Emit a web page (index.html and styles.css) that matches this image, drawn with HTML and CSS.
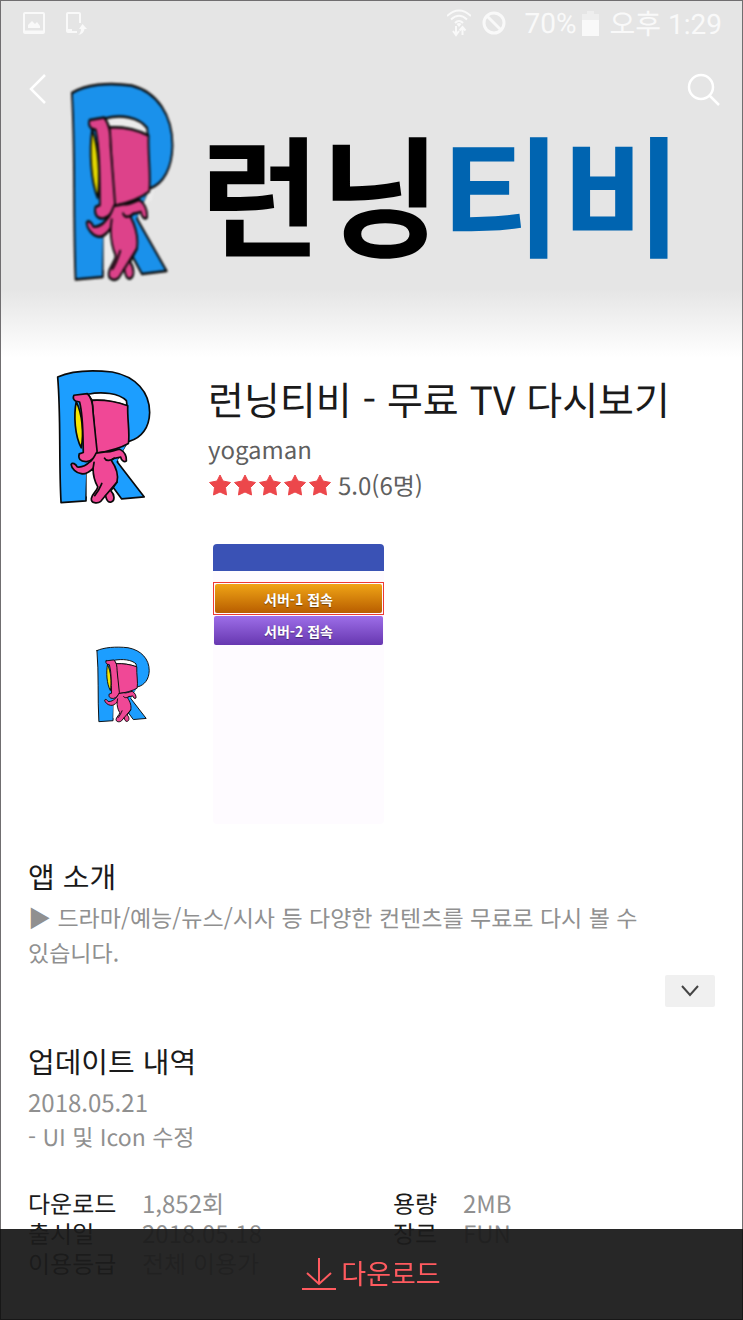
FILE: index.html
```html
<!DOCTYPE html>
<html lang="ko">
<head>
  <meta charset="UTF-8">
  <meta name="viewport" content="width=device-width, initial-scale=1.0">
  <title>런닝티비 - 무료 TV 다시보기</title>
  <link rel="stylesheet" href="styles.css">
</head>
<body>
  <svg class="defs" aria-hidden="true">
    <symbol id="mascot" viewBox="48 26 282 404" preserveAspectRatio="none">
      <g stroke="#0a0a0a" stroke-width="5" stroke-linejoin="round" stroke-linecap="round">
        <path fill="#1c9eff" d="M53 50C90 33 150 28 215 35C285 48 326 95 326 155C325 200 302 231 265 241L230 302L310 406L243 412L205 360L195 300L140 330L137 418L63 423C56 300 63 170 53 50Z"/>
        <path fill="#fff" stroke="none" d="M231 298L263 243L275 244L270 265L258 270L262 299L240 302ZM139 332L158 312L168 370L152 400L139 405Z"/>
        <path fill="#fff" d="M143 101C185 92 235 98 257 120L259 136C225 122 190 118 155 119Z"/>
        <path fill="#f04896" d="M155 119C190 117 225 122 261 135C259 175 268 215 263 247C237 262 205 270 168 276Z"/>
        <path fill="#f5e800" d="M108 123C100 165 104 225 123 260C131 215 126 160 108 123Z"/>
        <path fill="#f04896" d="M101 104L141 99C155 112 158 130 158 155L170 270C170 284 155 298 139 301C119 302 113 291 117 278L129 274C128 220 129 165 118 124L106 121C99 116 98 110 101 104Z"/>
        <path fill="#f04896" d="M195 272C207 275 220 267 237 264C252 272 258 285 257 299C250 305 242 297 240 288L219 292L212 297C228 320 234 342 229 362L211 388C223 400 223 417 212 421C201 425 197 411 195 402L181 419C171 427 151 425 153 410C155 397 169 390 172 376C160 356 158 337 158 321C146 333 136 340 123 337C108 335 94 321 93 310C96 302 107 308 111 317C127 319 139 311 148 302C157 297 162 285 167 276Z"/>
        <path fill="none" d="M192 291C197 302 211 297 221 291M184 366C177 382 174 390 163 402M229 362L195 402M158 321L161 303"/>
      </g>
    </symbol>
    <symbol id="star" viewBox="0 0 24 24">
      <path fill="#ec474b" stroke="#ec474b" stroke-width="1" stroke-linejoin="round" d="M12 2L15 8L22.500 9.500L17.500 14.500L18.500 22L12 19L5.500 22L6.500 14.500L1.500 9.500L9 8Z"/>
    </symbol>
  </svg>

  <div class="app">
    <header class="banner">
      <div class="banner-art">
        <svg class="banner-mascot" aria-hidden="true"><use href="#mascot"/></svg>
        <div class="banner-name">런닝<span>티비</span></div>
      </div>
      <div class="banner-top">
        <div class="status">
          <div class="status-group">
            <svg width="22" height="24" viewBox="0 0 22 24" fill="none" stroke="#f9f9f9" stroke-width="2">
              <rect x="1" y="2" width="20" height="20" rx="1"/>
              <path d="M1 20.500H21"/>
              <path d="M5 17V14L9 10L12 13L14 11L17 15V17Z" fill="#f9f9f9" stroke="none"/>
            </svg>
            <svg width="22" height="24" viewBox="0 0 22 24" fill="none" stroke="#f9f9f9" stroke-width="2">
              <path d="M15 12V3Q15 2 14 2H3Q2 2 2 3V20Q2 21 3 21H12M2 19H7"/>
              <path d="M17.500 13L22 18H19.500Q19 23 13 24Q16 22 16 18H14Z" fill="#f9f9f9" stroke="none"/>
            </svg>
          </div>
          <div class="status-group status-right">
            <svg width="24" height="28" viewBox="0 0 24 28" fill="none" stroke="#f9f9f9" stroke-width="2">
              <path d="M0 7Q12 -4 24 7M4 10.500Q12 3 20 10.500M8 14Q12 10 16 14"/>
              <path d="M12 18L9.500 15Q12 13 14.500 15Z" fill="#f9f9f9" stroke="none"/>
              <path d="M9 17V25M6 22L9 26L12 22M15.500 26V19M12.500 21.500L15.500 18L18.500 21.500"/>
            </svg>
            <svg width="24" height="24" viewBox="0 0 24 24" fill="none" stroke="#f9f9f9" stroke-width="3">
              <circle cx="12" cy="12" r="10"/><path d="M5 5L19 19"/>
            </svg>
            <span class="percent">70%</span>
            <svg width="17" height="25" viewBox="0 0 17 25">
              <path fill="#eee" d="M0 3H5V0H12V3H17V10H0Z"/><path fill="#f9f9f9" d="M0 9H17V25H0Z"/>
            </svg>
            <span class="clock">오후 1:29</span>
          </div>
        </div>
        <nav class="nav">
          <button class="icon-btn" aria-label="뒤로">
            <svg width="20" height="34" viewBox="0 0 20 34" fill="none" stroke="#fff" stroke-width="2.500"><path d="M17 3L3 17L17 31"/></svg>
          </button>
          <button class="icon-btn" aria-label="검색">
            <svg width="34" height="34" viewBox="0 0 34 34" fill="none" stroke="#fff" stroke-width="2.500"><circle cx="14" cy="15" r="12"/><path d="M22.500 23.500L32 33"/></svg>
          </button>
        </nav>
      </div>
    </header>

    <main>
      <section class="summary">
        <svg class="app-icon" aria-hidden="true"><use href="#mascot"/></svg>
        <div class="summary-text">
          <h1>런닝티비 - 무료 TV 다시보기</h1>
          <p>yogaman</p>
          <div class="rating">
            <svg><use href="#star"/></svg>
            <svg><use href="#star"/></svg>
            <svg><use href="#star"/></svg>
            <svg><use href="#star"/></svg>
            <svg><use href="#star"/></svg>
            <span>5.0(6명)</span>
          </div>
        </div>
      </section>

      <section class="shots">
        <div class="shot shot-splash">
          <svg class="splash-icon" aria-hidden="true"><use href="#mascot"/></svg>
        </div>
        <div class="shot shot-server">
          <div class="shot-bar"></div>
          <div class="selected"><button class="server orange">서버-1 접속</button></div>
          <button class="server purple">서버-2 접속</button>
        </div>
      </section>

      <section class="intro">
        <h2>앱 소개</h2>
        <p>▶ 드라마/예능/뉴스/시사 등 다양한 컨텐츠를 무료로 다시 볼 수 있습니다.</p>
        <button class="more" aria-label="더보기">
          <svg width="18" height="12" viewBox="0 0 18 12" fill="none" stroke="#444" stroke-width="2"><path d="M1 1L9 10L17 1"/></svg>
        </button>
      </section>

      <section class="updates">
        <h2>업데이트 내역</h2>
        <p class="date">2018.05.21</p>
        <p>- UI 및 Icon 수정</p>
      </section>

      <dl class="details">
        <dt>다운로드</dt><dd>1,852회</dd>
        <dt>용량</dt><dd>2MB</dd>
        <dt>출시일</dt><dd>2018.05.18</dd>
        <dt>장르</dt><dd>FUN</dd>
        <dt>이용등급</dt><dd>전체 이용가</dd>
      </dl>
    </main>

    <button class="download">
      <svg width="34" height="34" viewBox="0 0 34 34" fill="none" stroke="#ff5a5f" stroke-width="2"><path d="M17 1V27M5 16L17 27L29 16M0 32H34"/></svg>
      <span>다운로드</span>
    </button>
  </div>
</body>
</html>
```
FILE: styles.css
```css
* {
  box-sizing: border-box;
}
body {
  margin: 0;
  background: #fff;
  color: #1a1a1a;
  font-family: "Noto Sans CJK KR", sans-serif;
  text-rendering: geometricPrecision;
}
h1, h2, p, dl, dd {
  margin: 0;
  font-weight: 400;
}
button {
  border: none;
  padding: 0;
  background: none;
  font-family: inherit;
  cursor: pointer;
}
svg {
  display: block;
  flex-shrink: 0;
}
.defs {
  position: absolute;
  width: 0;
  height: 0;
}
.app {
  min-height: 100vh;
  border: 1px solid #706e70;
}

/* banner */
.banner {
  position: relative;
  height: 360px;
  background: linear-gradient(#e5e5e5 80%, #fff 99%);
}
.banner-art {
  display: flex;
  padding: 80px 64px 0 69px;
  gap: 26px;
}
.banner-mascot {
  width: 104px;
  height: 202px;
  filter: brightness(0.92) blur(1px);
}
.banner-name {
  padding-top: 8px;
  font-size: 131px;
  line-height: 202px;
  font-weight: 700;
  color: #000;
  white-space: nowrap;
}
.banner-name span {
  color: #0064b0;
}
.banner-top {
  position: absolute;
  top: 0;
  left: 0;
  right: 0;
}
.status {
  display: flex;
  justify-content: space-between;
  height: 44px;
  padding: 0 20px 0 22px;
  color: #f9f9f9;
  font-family: Roboto, "Noto Sans CJK KR", sans-serif;
  font-size: 28px;
  font-weight: 400;
}
.status-group {
  display: flex;
  align-items: center;
  gap: 20px;
}
.status-right {
  gap: 11px;
}
.percent {
  margin-left: 8px;
  margin-right: -6px;
}
.nav {
  display: flex;
  justify-content: space-between;
  align-items: center;
  padding: 27px 21px 0 27px;
}

/* app summary */
.summary {
  display: flex;
  gap: 57px;
  padding: 8px 28px 0 55px;
}
.app-icon {
  width: 95px;
  height: 136px;
}
.summary-text h1 {
  font-size: 39px;
  line-height: 60px;
}
.summary-text p,
.rating {
  color: #5f5f5f;
  font-size: 24px;
  line-height: 36px;
}
.summary-text p {
  margin-top: 2px;
}
.rating {
  display: flex;
  align-items: center;
  gap: 1px;
}
.rating svg {
  width: 24px;
  height: 24px;
}
.rating span {
  margin-left: 5px;
}

/* screenshots */
.shots {
  display: flex;
  gap: 5px;
  margin-top: 39px;
  padding: 0 36px;
}
.shot {
  width: 171px;
  height: 280px;
}
.shot-splash {
  display: flex;
  align-items: center;
  justify-content: center;
}
.splash-icon {
  width: 54px;
  height: 77px;
}
.shot-server {
  background: #fefbff;
  border-radius: 4px;
  overflow: hidden;
}
.shot-bar {
  height: 27px;
  margin-bottom: 11px;
  background: #3a52b5;
}
.selected {
  padding: 1px;
  border: 1px solid #ee3b35;
}
.server {
  display: block;
  width: 100%;
  height: 29px;
  border-radius: 2px;
  color: #fff;
  font-size: 14px;
  font-weight: 700;
  text-shadow: 0 1px 1px rgba(0, 0, 0, 0.4);
}
.orange {
  background: linear-gradient(#f0a516, #b85d00);
}
.purple {
  width: 169px;
  margin: 1px auto 0;
  background: linear-gradient(#9d6ee8, #6737b0);
}

/* text sections */
.intro,
.updates {
  padding: 0 27px;
}
.intro {
  margin-top: 30px;
}
h2 {
  font-size: 29px;
  line-height: 44px;
}
.intro p,
.updates p {
  color: #909090;
  font-size: 23px;
  line-height: 35px;
}
.intro p {
  margin-top: 2px;
  padding-right: 60px;
}
.updates .date {
  margin-top: 1px;
  font-size: 24px;
}
.more {
  display: flex;
  align-items: center;
  justify-content: center;
  width: 50px;
  height: 32px;
  margin: 5px 0 0 auto;
  border-radius: 2px;
  background: #f0f0f0;
}
.updates {
  margin-top: 32px;
}
.details {
  display: grid;
  grid-template-columns: 114px 251px 70px 1fr;
  margin-top: 34px;
  padding: 0 0 36px 27px;
  font-size: 24px;
  line-height: 30px;
}
.details dd {
  color: #909090;
}

/* bottom bar */
.download {
  position: fixed;
  left: 0;
  right: 0;
  bottom: 0;
  display: flex;
  align-items: center;
  justify-content: center;
  gap: 5px;
  width: 100%;
  height: 91px;
  border: 1px solid #171717;
  border-top: none;
  background: rgba(27, 27, 27, 0.95);
  color: #ff5a5f;
  font-size: 27px;
}
.download span {
  padding-bottom: 4px;
}
```
